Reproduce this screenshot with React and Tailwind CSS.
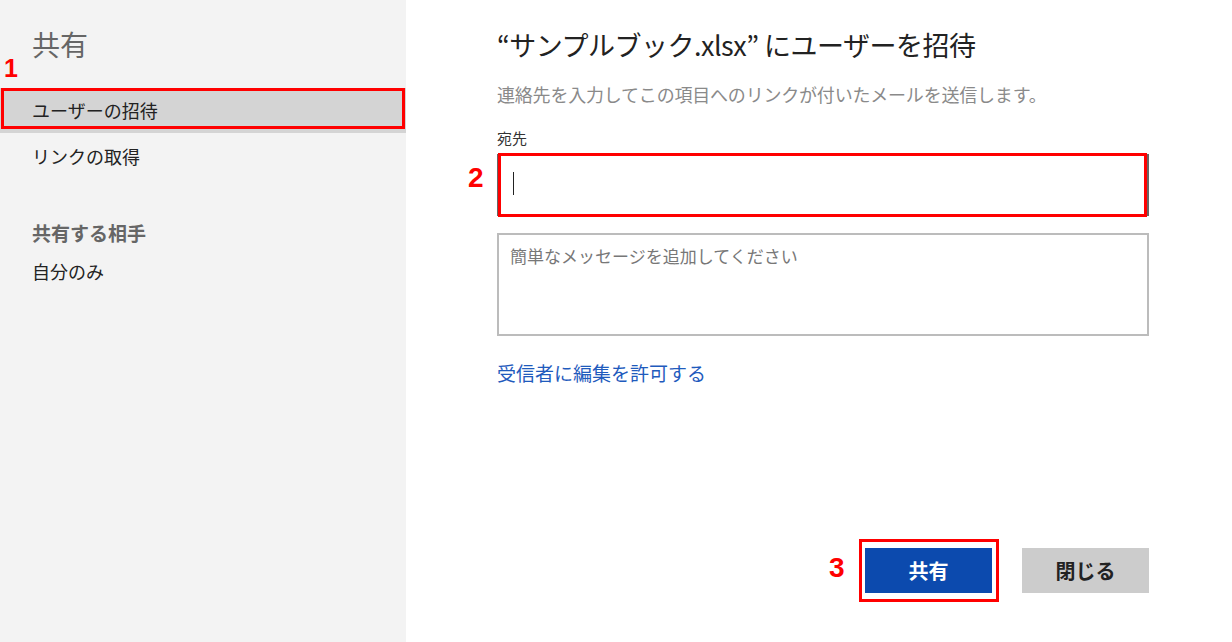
export default function App() {
    return (
        <div className="flex w-[1232px] h-[642px] bg-white font-['Noto_Sans_CJK_JP',sans-serif] text-[#222]">
            {/* left nav */}
            <aside className="relative w-[406px] h-full bg-[#f3f3f3] pt-[26px]">
                <h1 className="pl-[32px] text-[28px] leading-[36px] text-[#666]">共有</h1>
                <span className="absolute left-[4px] top-[54px] font-['Liberation_Sans',sans-serif] text-[25px] leading-[28px] font-bold text-[#ff0000]">1</span>

                <div className="relative mt-[26px] h-[45px] flex items-center pl-[32px] bg-[#d4d4d4] text-[18px]">
                    ユーザーの招待
                    <div className="absolute left-[1px] right-[1px] top-0 h-[41px] border-[3px] border-[#ff0000]" />
                </div>
                <div className="h-[46px] flex items-center pl-[32px] text-[18px]">リンクの取得</div>

                <div className="mt-[40px] pl-[32px] text-[19px] leading-[28px] font-bold text-[#666]">共有する相手</div>
                <div className="mt-[10px] pl-[32px] text-[18px] leading-[28px]">自分のみ</div>
            </aside>

            {/* invite form */}
            <main className="flex-1 flex flex-col pl-[91px] pr-[83px] pt-[27px] pb-[49px]">
                <h2 className="text-[27px] leading-[36px] tracking-[-0.5px]">“サンプルブック.xlsx” にユーザーを招待</h2>
                <p className="mt-[18px] text-[18px] leading-[26px] text-[#8a8a8a] tracking-[-0.2px]">
                    連絡先を入力してこの項目へのリンクが付いたメールを送信します。
                </p>
                <label className="mt-[21px] text-[15px] leading-[20px] text-[#333]">宛先</label>

                <div className="relative mt-[6px] h-[62px] border-2 border-[#666] bg-white">
                    <div className="absolute left-[14px] top-[16px] w-px h-[23px] bg-[#222]" />
                    <div className="absolute -left-[1px] right-0 -top-[3px] -bottom-[3px] border-[3px] border-[#ff0000]" />
                    <span className="absolute -left-[31px] top-[8px] font-['Liberation_Sans',sans-serif] text-[28px] leading-[28px] font-bold text-[#ff0000]">2</span>
                </div>

                <div className="mt-[17px] h-[103px] border-2 border-[#bcbcbc] px-[11px] pt-[8px] text-[17px] leading-[26px] text-[#777]">
                    簡単なメッセージを追加してください
                </div>

                <a className="mt-[23px] text-[19px] leading-[28px] text-[#1f5bbd]">受信者に編集を許可する</a>

                <div className="mt-auto flex justify-end gap-[30px]">
                    <div className="relative">
                        <button className="w-[127px] h-[45px] bg-[#0c4aae] text-white text-[20px] font-bold">共有</button>
                        <div className="absolute -left-[6px] -right-[7px] -top-[9px] -bottom-[9px] border-[3px] border-[#ff0000]" />
                        <span className="absolute -left-[36px] top-[6px] font-['Liberation_Sans',sans-serif] text-[28px] leading-[28px] font-bold text-[#ff0000]">3</span>
                    </div>
                    <button className="w-[127px] h-[45px] bg-[#cccccc] text-[#222] text-[20px] font-bold">閉じる</button>
                </div>
            </main>
        </div>
    );
}
